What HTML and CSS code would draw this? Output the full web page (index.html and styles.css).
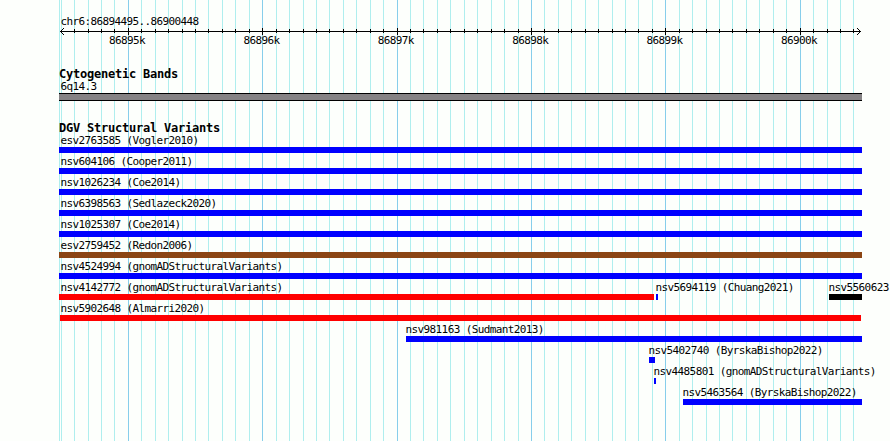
FILE: index.html
```
<!DOCTYPE html>
<html lang="en">
<head>
    <meta charset="UTF-8">
    <title>chr6:86894495..86900448</title>
    <link rel="stylesheet" href="styles.css">
</head>
<body>
    <!-- Vertical grid lines -->
    <svg class="grid" width="890" height="441" shape-rendering="crispEdges">
        <path class="minor" d="M59.5 0v441M61.5 0v441M74.5 0v441M88.5 0v441M101.5 0v441M114.5 0v441M141.5 0v441M155.5 0v441M168.5 0v441M182.5 0v441M195.5 0v441M208.5 0v441M222.5 0v441M235.5 0v441M249.5 0v441M276.5 0v441M289.5 0v441M303.5 0v441M316.5 0v441M329.5 0v441M343.5 0v441M356.5 0v441M370.5 0v441M383.5 0v441M410.5 0v441M423.5 0v441M437.5 0v441M450.5 0v441M464.5 0v441M477.5 0v441M491.5 0v441M504.5 0v441M518.5 0v441M544.5 0v441M558.5 0v441M571.5 0v441M585.5 0v441M598.5 0v441M612.5 0v441M625.5 0v441M638.5 0v441M652.5 0v441M679.5 0v441M692.5 0v441M706.5 0v441M719.5 0v441M732.5 0v441M746.5 0v441M759.5 0v441M773.5 0v441M786.5 0v441M813.5 0v441M827.5 0v441M840.5 0v441M853.5 0v441"/>
        <path class="major" d="M128.5 0v441M262.5 0v441M397.5 0v441M531.5 0v441M665.5 0v441M800.5 0v441"/>
    </svg>

    <div class="panel">
        <!-- Scale -->
        <div class="ruler">
            <div class="label">chr6:86894495..86900448</div>
            <svg class="axis" viewBox="59 28 803 7" width="803" height="7" shape-rendering="crispEdges">
                <path d="M60 31.5h801"/>
                <path d="M74.5 29v4M88.5 29v4M101.5 29v4M114.5 29v4M141.5 29v4M155.5 29v4M168.5 29v4M182.5 29v4M195.5 29v4M208.5 29v4M222.5 29v4M235.5 29v4M249.5 29v4M276.5 29v4M289.5 29v4M303.5 29v4M316.5 29v4M329.5 29v4M343.5 29v4M356.5 29v4M370.5 29v4M383.5 29v4M410.5 29v4M423.5 29v4M437.5 29v4M450.5 29v4M464.5 29v4M477.5 29v4M491.5 29v4M504.5 29v4M518.5 29v4M544.5 29v4M558.5 29v4M571.5 29v4M585.5 29v4M598.5 29v4M612.5 29v4M625.5 29v4M638.5 29v4M652.5 29v4M679.5 29v4M692.5 29v4M706.5 29v4M719.5 29v4M732.5 29v4M746.5 29v4M759.5 29v4M773.5 29v4M786.5 29v4M813.5 29v4M827.5 29v4M840.5 29v4M853.5 29v4"/>
                <path d="M128.5 28v7M262.5 28v7M397.5 28v7M531.5 28v7M665.5 28v7M800.5 28v7"/>
                <path d="M61 30.5h1M62 29.5h1M63 28.5h1M61 32.5h1M62 33.5h1M63 34.5h1M859 30.5h1M858 29.5h1M857 28.5h1M859 32.5h1M858 33.5h1M857 34.5h1"/>
            </svg>
            <div class="ticks">
                <span>86895k</span><span>86896k</span><span>86897k</span><span>86898k</span><span>86899k</span><span>86900k</span>
            </div>
        </div>

        <!-- Cytogenetic bands -->
        <div class="track bands">
            <h2>Cytogenetic Bands</h2>
            <div class="label">6q14.3</div>
            <div class="band"></div>
        </div>

        <!-- Structural variants -->
        <div class="track variants">
            <h2>DGV Structural Variants</h2>
            <div class="row"><div class="feature full"><span class="label">esv2763585 (Vogler2010)</span></div></div>
            <div class="row"><div class="feature full"><span class="label">nsv604106 (Cooper2011)</span></div></div>
            <div class="row"><div class="feature full"><span class="label">nsv1026234 (Coe2014)</span></div></div>
            <div class="row"><div class="feature full"><span class="label">nsv6398563 (Sedlazeck2020)</span></div></div>
            <div class="row"><div class="feature full"><span class="label">nsv1025307 (Coe2014)</span></div></div>
            <div class="row"><div class="feature full brown"><span class="label">esv2759452 (Redon2006)</span></div></div>
            <div class="row"><div class="feature full"><span class="label">nsv4524994 (gnomADStructuralVariants)</span></div></div>
            <div class="row">
                <div class="feature red" style="width: 595px"><span class="label">nsv4142772 (gnomADStructuralVariants)</span></div>
                <div class="feature inner" style="margin-left: 2px; width: 2px"><span class="label">nsv5694119 (Chuang2021)</span></div>
                <div class="feature inner black" style="margin-left: 171px; width: 33px"><span class="label">nsv5560623</span></div>
            </div>
            <div class="row"><div class="feature red inner" style="margin-left: 1px; width: 801px"><span class="label">nsv5902648 (Almarri2020)</span></div></div>
            <div class="row"><div class="feature inner" style="margin-left: 347px; width: 456px"><span class="label">nsv981163 (Sudmant2013)</span></div></div>
            <div class="row"><div class="feature inner" style="margin-left: 590px; width: 6px"><span class="label">nsv5402740 (ByrskaBishop2022)</span></div></div>
            <div class="row"><div class="feature inner" style="margin-left: 595px; width: 2px"><span class="label">nsv4485801 (gnomADStructuralVariants)</span></div></div>
            <div class="row"><div class="feature inner" style="margin-left: 624px; width: 179px"><span class="label">nsv5463564 (ByrskaBishop2022)</span></div></div>
        </div>
    </div>
</body>
</html>
```
FILE: styles.css
```
body {
    margin: 0;
    width: 890px;
    height: 441px;
    overflow: hidden;
    background: #fdfffc;
    color: #000;
    font-family: "DejaVu Sans Mono", monospace;
    position: relative;
}

/* Grid behind the tracks */
.grid {
    position: absolute;
    top: 0;
    left: 0;
}

.grid .minor {
    stroke: #afeeee;
}

.grid .major {
    stroke: #87ceeb;
}

.panel {
    position: relative;
    width: 803px;
    margin-left: 59px;
    padding-top: 13px;
}

.label,
.ticks {
    font-size: 11px;
    line-height: 15px;
    letter-spacing: -0.62px;
    white-space: nowrap;
}

.label {
    display: block;
    height: 15px;
    padding-left: 1.4px;
    line-height: 17px;
}

h2 {
    margin: 0;
    height: 12px;
    font-size: 12px;
    line-height: 14px;
    letter-spacing: -0.22px;
    white-space: nowrap;
}

/* Ruler */
.ruler {
    height: 54px;
}

.axis {
    display: block;
}

.axis path {
    fill: none;
    stroke: #000;
}

.ticks {
    display: flex;
    gap: 98.4px;
    padding-left: 50px;
    margin-top: -2px;
}

.ticks span {
    width: 36px;
}

/* Tracks */
.bands {
    height: 54px;
}

.bands .label {
    height: 14px;
    line-height: 15px;
}

.band {
    box-sizing: border-box;
    height: 8px;
    border: solid #000;
    border-width: 1px 0;
    background: #858284;
}

.variants h2 {
    height: 11px;
}

.row {
    display: flex;
    height: 21px;
}

.feature {
    flex: none;
    box-sizing: border-box;
    height: 21px;
    border-bottom: 6px solid #00f;
}

.full {
    width: 803px;
}

.inner .label {
    padding-left: 0;
    margin-left: -0.4px;
}

.red {
    border-color: #f00;
}

.red.inner .label {
    margin-left: 0.4px;
}

.brown {
    border-color: #8b4513;
}

.black {
    border-color: #000;
}
```
